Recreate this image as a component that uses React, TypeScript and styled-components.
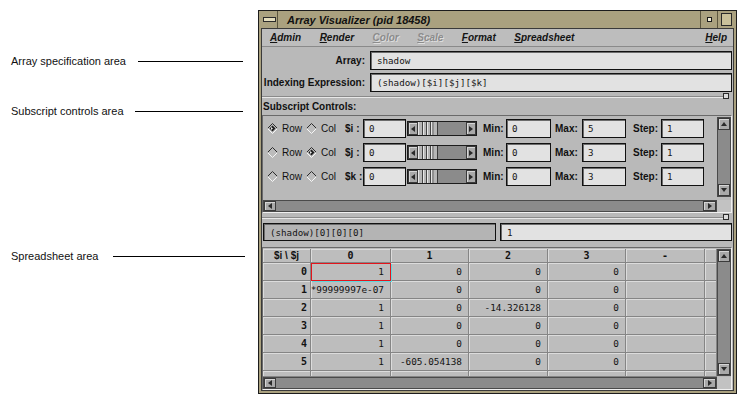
import React from "react";
import styled, { createGlobalStyle, css } from "styled-components";

const GlobalStyle = createGlobalStyle`
  html, body { margin: 0; padding: 0; background: #ffffff; }
  body {
    width: 750px;
    height: 406px;
    overflow: hidden;
    font-family: "Liberation Sans", Arial, sans-serif;
  }
`;

const KHAKI = "#aaa17f";
const GRAY = "#b9b9b9";
const LIGHT = "#e2e2e2";
const TROUGH = "#8b8b8b";
const MONO = `"DejaVu Sans Mono", "Liberation Mono", monospace`;

const Page = styled.div`
  display: flex;
  width: 750px;
  height: 406px;
`;

const Notes = styled.div`
  width: 258px;
  flex: none;
  box-sizing: border-box;
  padding: 0 15px 0 11px;
  display: flex;
  flex-direction: column;
`;

const Callout = styled.div<{ $top: number }>`
  display: flex;
  align-items: center;
  height: 14px;
  margin-top: ${(p) => p.$top}px;
  font-size: 11px;
  color: #111;
  white-space: nowrap;
`;

const Leader = styled.span<{ $gap: number; $extra?: number }>`
  flex: 1;
  height: 1px;
  background: #000;
  margin-left: ${(p) => p.$gap}px;
  margin-right: ${(p) => -(p.$extra ?? 0)}px;
`;

const Window = styled.div`
  margin-top: 10px;
  width: 479px;
  height: 384px;
  box-sizing: border-box;
  border: 1px solid #1c1c1c;
  background: ${KHAKI};
  padding: 0 2px 2px;
  display: flex;
  flex-direction: column;
`;

const TitleBar = styled.div`
  height: 17px;
  flex: none;
  display: flex;
  align-items: stretch;
  background-color: ${KHAKI};
  background-image: radial-gradient(rgba(60, 50, 20, 0.14) 0.6px, transparent 0.7px);
  background-size: 2px 2px;
`;

const TitleButton = styled.div<{ $side: "left" | "right" }>`
  width: 16px;
  flex: none;
  display: flex;
  align-items: center;
  justify-content: center;
  ${(p) =>
    p.$side === "left"
      ? css`border-right: 1px solid #5c563f;`
      : css`border-left: 1px solid #5c563f;`}
`;

const MenuBar3D = styled.span`
  width: 11px;
  height: 3px;
  border: 1px solid #2a2a2a;
  background: #e4ddbd;
`;

const MinGlyph = styled.span`
  width: 3px;
  height: 3px;
  border: 1px solid #1a1a1a;
  background: #f4f0dc;
`;

const MaxGlyph = styled.span`
  width: 9px;
  height: 11px;
  border: 1px solid #2a2a2a;
  background: #c9c09a;
`;

const Title = styled.div`
  margin-left: 9px;
  flex: 1;
  font-size: 11px;
  font-weight: bold;
  font-style: italic;
  color: #111;
  display: flex;
  align-items: center;
`;

const Client = styled.div`
  flex: 1;
  min-height: 0;
  border: 1px solid #3a3a3a;
  background: ${GRAY};
  display: flex;
  flex-direction: column;
`;

const MenuBar = styled.div`
  height: 17px;
  flex: none;
  display: flex;
  align-items: center;
  gap: 18.5px;
  padding: 0 6px 0 8px;
  border-bottom: 1px solid #8a8a8a;
  background: #bdbdbd;
`;

const MenuItem = styled.span<{ $disabled?: boolean; $push?: boolean }>`
  font-size: 10px;
  font-weight: bold;
  font-style: italic;
  color: ${(p) => (p.$disabled ? "#8c8c8c" : "#141414")};
  text-shadow: ${(p) => (p.$disabled ? "1px 1px 0 #dedede" : "none")};
  margin-left: ${(p) => (p.$push ? "auto" : "0")};
  & > u {
    text-decoration: underline;
    text-underline-offset: 1px;
  }
`;

const Form = styled.div`
  display: grid;
  grid-template-columns: 103px 1fr;
  column-gap: 5px;
  row-gap: 3px;
  padding: 4px 1px 0 0;
`;

const FormLabel = styled.div`
  font-size: 10px;
  font-weight: bold;
  color: #111;
  text-align: right;
  display: flex;
  align-items: center;
  justify-content: flex-end;
`;

const Field = styled.div<{ $w?: number; $tone?: "light" | "gray"; $pad?: number }>`
  box-sizing: border-box;
  height: 19px;
  width: ${(p) => (p.$w ? `${p.$w}px` : "auto")};
  flex: ${(p) => (p.$w ? "none" : "1")};
  border: 1px solid #111;
  box-shadow: inset 1px 1px 0 #6c6c6c;
  background: ${(p) => (p.$tone === "gray" ? "#b4b4b4" : LIGHT)};
  font-family: ${MONO};
  font-size: 9.2px;
  color: #151515;
  display: flex;
  align-items: center;
  padding-left: ${(p) => p.$pad ?? 6}px;
  white-space: nowrap;
  overflow: hidden;
`;

const Sash = styled.div<{ $top: number }>`
  height: 6px;
  flex: none;
  margin-top: ${(p) => p.$top}px;
  display: flex;
  align-items: center;
  padding-right: 4px;
`;

const SashLine = styled.span`
  flex: 1;
  height: 1px;
  background: #8a8a8a;
  box-shadow: 0 1px 0 #e8e8e8;
`;

const SashKnob = styled.span`
  width: 4px;
  height: 4px;
  border: 1px solid #2c2c2c;
  background: #dcdcdc;
`;

const SectionLabel = styled.div`
  height: 15px;
  line-height: 15px;
  padding-left: 1px;
  font-size: 10px;
  font-weight: bold;
  color: #111;
`;

const Panel = styled.div<{ $h?: number; $top: number }>`
  margin-top: ${(p) => p.$top}px;
  margin-right: 1px;
  ${(p) => (p.$h ? css`height: ${p.$h}px; flex: none;` : css`flex: 1; min-height: 0;`)}
  box-sizing: border-box;
  border: 1px solid;
  border-color: #6a6a6a #f0f0f0 #f0f0f0 #6a6a6a;
  display: grid;
  grid-template-columns: 1fr 14px;
  grid-template-rows: 1fr 12px;
`;

const Rows = styled.div`
  padding: 3px 0 0 4px;
  display: flex;
  flex-direction: column;
  gap: 5px;
  overflow: hidden;
`;

const CtlRow = styled.div`
  height: 19px;
  display: flex;
  align-items: center;
  font-size: 10px;
  color: #111;
`;

const Txt = styled.span<{ $ml: number; $w?: number; $bold?: boolean }>`
  margin-left: ${(p) => p.$ml}px;
  ${(p) => (p.$w ? css`width: ${p.$w}px; flex: none;` : "")}
  font-weight: ${(p) => (p.$bold ? "bold" : "normal")};
  white-space: nowrap;
`;

const DiamondWrap = styled.span<{ $ml: number }>`
  margin-left: ${(p) => p.$ml}px;
  width: 11px;
  height: 11px;
  display: flex;
`;

const Slider = styled.div`
  margin-left: 1px;
  width: 70px;
  height: 15px;
  box-sizing: border-box;
  border: 1px solid #1c1c1c;
  background: ${TROUGH};
  display: flex;
  flex: none;
`;

const Arrow = styled.div<{ $size: number; $dir: "h" | "v" }>`
  ${(p) => (p.$dir === "h" ? css`width: ${p.$size}px;` : css`height: ${p.$size}px;`)}
  flex: none;
  box-sizing: border-box;
  background: #a9a9a9;
  border: 1px solid #3a3a3a;
  box-shadow: inset 1px 1px 0 #d6d6d6;
  display: flex;
  align-items: center;
  justify-content: center;
`;

const Thumb = styled.div`
  width: 20px;
  flex: none;
  box-sizing: border-box;
  border-right: 1px solid #3a3a3a;
  background-color: #b6b6b6;
  background-image: linear-gradient(
    90deg,
    #e6e6e6 0 1px,
    #b6b6b6 1px 4px,
    #444 4px 5px,
    #e6e6e6 5px 6px,
    #b6b6b6 6px 8px,
    #444 8px 9px,
    #e6e6e6 9px 10px,
    #b6b6b6 10px 12px,
    #444 12px 13px,
    #e6e6e6 13px 14px,
    #8f8f8f 14px 16px,
    #b6b6b6 16px 20px
  );
`;

const Track = styled.div`
  flex: 1;
  background: ${TROUGH};
`;

const ScrollBar = styled.div<{ $dir: "h" | "v"; $m?: string }>`
  display: flex;
  flex-direction: ${(p) => (p.$dir === "h" ? "row" : "column")};
  background: ${TROUGH};
  border: 1px solid #4a4a4a;
  box-sizing: border-box;
  margin: ${(p) => p.$m ?? "0"};
  min-height: 0;
  min-width: 0;
`;

const Corner = styled.div`
  background: #c2c2c2;
`;

const StatusRow = styled.div`
  margin-top: 3px;
  height: 18px;
  flex: none;
  display: flex;
  gap: 4px;
  padding: 0 1px 0 1px;
  & > div {
    height: 18px;
  }
`;

const Grid = styled.div`
  margin-top: 1px;
  display: grid;
  grid-template-columns: 48px 80px 78px 79px 78px 79px 1fr;
  grid-template-rows: 14px repeat(6, 18px) 1fr;
  overflow: hidden;
  min-height: 0;
`;

type CellKind = "corner" | "colhead" | "rowhead" | "data";

const Cell = styled.div<{ $kind: CellKind; $sel?: boolean }>`
  box-sizing: border-box;
  background: #bdbdbd;
  border-right: 1px solid #858585;
  border-bottom: 1px solid #858585;
  box-shadow: inset 1px 1px 0 #dcdcdc;
  display: flex;
  align-items: center;
  white-space: nowrap;
  overflow: hidden;
  color: #121212;
  ${(p) => {
    switch (p.$kind) {
      case "corner":
        return css`
          justify-content: center;
          font-size: 10px;
          font-weight: bold;
        `;
      case "colhead":
        return css`
          justify-content: center;
          font-family: ${MONO};
          font-weight: bold;
          font-size: 10px;
        `;
      case "rowhead":
        return css`
          justify-content: flex-end;
          padding-right: 3px;
          font-family: ${MONO};
          font-weight: bold;
          font-size: 10px;
        `;
      default:
        return css`
          justify-content: flex-end;
          padding-right: 6px;
          font-family: ${MONO};
          font-size: 9.4px;
        `;
    }
  }}
  ${(p) =>
    p.$sel &&
    css`
      outline: 1px solid #e3141b;
      outline-offset: -1px;
      box-shadow: 1px 1px 0 #5fd6dc;
      position: relative;
    `}
`;

function Diamond({ on }: { on?: boolean }) {
  return (
    <svg width="11" height="11" viewBox="0 0 11 11">
      <polygon points="5.5,0.5 10.5,5.5 5.5,10.5 0.5,5.5" fill="#bcbcbc" />
      <polyline points="0.5,5.5 5.5,0.5 10.5,5.5" fill="none" stroke="#2b2b2b" strokeWidth="1" />
      <polyline points="10.5,5.5 5.5,10.5 0.5,5.5" fill="none" stroke="#f6f6f6" strokeWidth="1" />
      {on && (
        <>
          <polygon points="5.5,2.5 8.5,5.5 5.5,8.5 2.5,5.5" fill="#1c1c1c" />
          <polygon points="4,4 6,5.5 4,7" fill="#e8e8e8" />
        </>
      )}
    </svg>
  );
}

function Tri({ dir }: { dir: "left" | "right" | "up" | "down" }) {
  const pts = {
    left: "5,1 1,4 5,7",
    right: "1,1 5,4 1,7",
    up: "1,5 4,1 7,5",
    down: "1,1 4,5 7,1",
  }[dir];
  const vert = dir === "up" || dir === "down";
  return (
    <svg width={vert ? 8 : 6} height={vert ? 6 : 8} viewBox={vert ? "0 0 8 6" : "0 0 6 8"}>
      <polygon points={pts} fill="#2a2a2a" />
    </svg>
  );
}

function HScroll() {
  return (
    <ScrollBar $dir="h">
      <Arrow $dir="h" $size={12}>
        <Tri dir="left" />
      </Arrow>
      <Track />
      <Arrow $dir="h" $size={13}>
        <Tri dir="right" />
      </Arrow>
    </ScrollBar>
  );
}

function VScroll({ m }: { m: string }) {
  return (
    <ScrollBar $dir="v" $m={m}>
      <Arrow $dir="v" $size={12}>
        <Tri dir="up" />
      </Arrow>
      <Track />
      <Arrow $dir="v" $size={12}>
        <Tri dir="down" />
      </Arrow>
    </ScrollBar>
  );
}

const controls = [
  { v: "$i", row: true, min: "0", max: "5" },
  { v: "$j", row: false, min: "0", max: "3" },
  { v: "$k", row: null as boolean | null, min: "0", max: "3" },
];

const tableRows = [
  ["0", "1", "0", "0", "0"],
  ["1", "*99999997e-07", "0", "0", "0"],
  ["2", "1", "0", "-14.326128", "0"],
  ["3", "1", "0", "0", "0"],
  ["4", "1", "0", "0", "0"],
  ["5", "1", "-605.054138", "0", "0"],
];

export default function App() {
  return (
    <>
      <GlobalStyle />
      <Page>
        <Notes>
          <Callout $top={54}>
            Array specification area
            <Leader $gap={12} />
          </Callout>
          <Callout $top={36}>
            Subscript controls area
            <Leader $gap={11} />
          </Callout>
          <Callout $top={131}>
            Spreadsheet area
            <Leader $gap={15} $extra={2} />
          </Callout>
        </Notes>

        <Window>
          <TitleBar>
            <TitleButton $side="left">
              <MenuBar3D />
            </TitleButton>
            <Title>Array Visualizer (pid 18458)</Title>
            <TitleButton $side="right">
              <MinGlyph />
            </TitleButton>
            <TitleButton $side="right">
              <MaxGlyph />
            </TitleButton>
          </TitleBar>

          <Client>
            <MenuBar>
              <MenuItem>
                <u>A</u>dmin
              </MenuItem>
              <MenuItem>
                <u>R</u>ender
              </MenuItem>
              <MenuItem $disabled>
                <u>C</u>olor
              </MenuItem>
              <MenuItem $disabled>
                <u>S</u>cale
              </MenuItem>
              <MenuItem>
                <u>F</u>ormat
              </MenuItem>
              <MenuItem>
                <u>S</u>preadsheet
              </MenuItem>
              <MenuItem $push>
                <u>H</u>elp
              </MenuItem>
            </MenuBar>

            <Form>
              <FormLabel>Array:</FormLabel>
              <Field>shadow</Field>
              <FormLabel>Indexing Expression:</FormLabel>
              <Field>(shadow)[$i][$j][$k]</Field>
            </Form>

            <Sash $top={1}>
              <SashLine />
              <SashKnob />
            </Sash>

            <SectionLabel>Subscript Controls:</SectionLabel>

            <Panel $h={98} $top={1}>
              <Rows>
                {controls.map((c) => (
                  <CtlRow key={c.v}>
                    <DiamondWrap $ml={0}>
                      <Diamond on={c.row === true} />
                    </DiamondWrap>
                    <Txt $ml={4}>Row</Txt>
                    <DiamondWrap $ml={4}>
                      <Diamond on={c.row === false} />
                    </DiamondWrap>
                    <Txt $ml={4}>Col</Txt>
                    <Txt $ml={9} $w={18} $bold>
                      {c.v} :
                    </Txt>
                    <Field $w={43} $pad={5}>
                      0
                    </Field>
                    <Slider>
                      <Arrow $dir="h" $size={10}>
                        <Tri dir="left" />
                      </Arrow>
                      <Thumb />
                      <Track />
                      <Arrow $dir="h" $size={10}>
                        <Tri dir="right" />
                      </Arrow>
                    </Slider>
                    <Txt $ml={6} $w={23} $bold>
                      Min:
                    </Txt>
                    <Field $w={45} $pad={5}>
                      {c.min}
                    </Field>
                    <Txt $ml={4} $w={27} $bold>
                      Max:
                    </Txt>
                    <Field $w={44} $pad={5}>
                      {c.max}
                    </Field>
                    <Txt $ml={7} $w={28} $bold>
                      Step:
                    </Txt>
                    <Field $w={43} $pad={5}>
                      1
                    </Field>
                  </CtlRow>
                ))}
              </Rows>
              <VScroll m="1px 0 3px 0" />
              <HScroll />
              <Corner />
            </Panel>

            <Sash $top={1}>
              <SashLine />
              <SashKnob />
            </Sash>

            <StatusRow>
              <Field $w={233} $tone="gray">
                (shadow)[0][0][0]
              </Field>
              <Field>1</Field>
            </StatusRow>

            <Panel $top={6}>
              <Grid>
                <Cell $kind="corner">$i \ $j</Cell>
                {["0", "1", "2", "3", "-", ""].map((h, i) => (
                  <Cell key={`h${i}`} $kind="colhead">
                    {h}
                  </Cell>
                ))}
                {tableRows.map((r, ri) => (
                  <React.Fragment key={ri}>
                    <Cell $kind="rowhead">{r[0]}</Cell>
                    {r.slice(1).map((v, ci) => (
                      <Cell key={ci} $kind="data" $sel={ri === 0 && ci === 0}>
                        {v}
                      </Cell>
                    ))}
                    <Cell $kind="data" />
                    <Cell $kind="data" />
                  </React.Fragment>
                ))}
                <Cell $kind="rowhead" />
                {[0, 1, 2, 3, 4, 5].map((i) => (
                  <Cell key={`p${i}`} $kind="data" />
                ))}
              </Grid>
              <VScroll m="1px 0 1px 0" />
              <HScroll />
              <Corner />
            </Panel>
          </Client>
        </Window>
      </Page>
    </>
  );
}
